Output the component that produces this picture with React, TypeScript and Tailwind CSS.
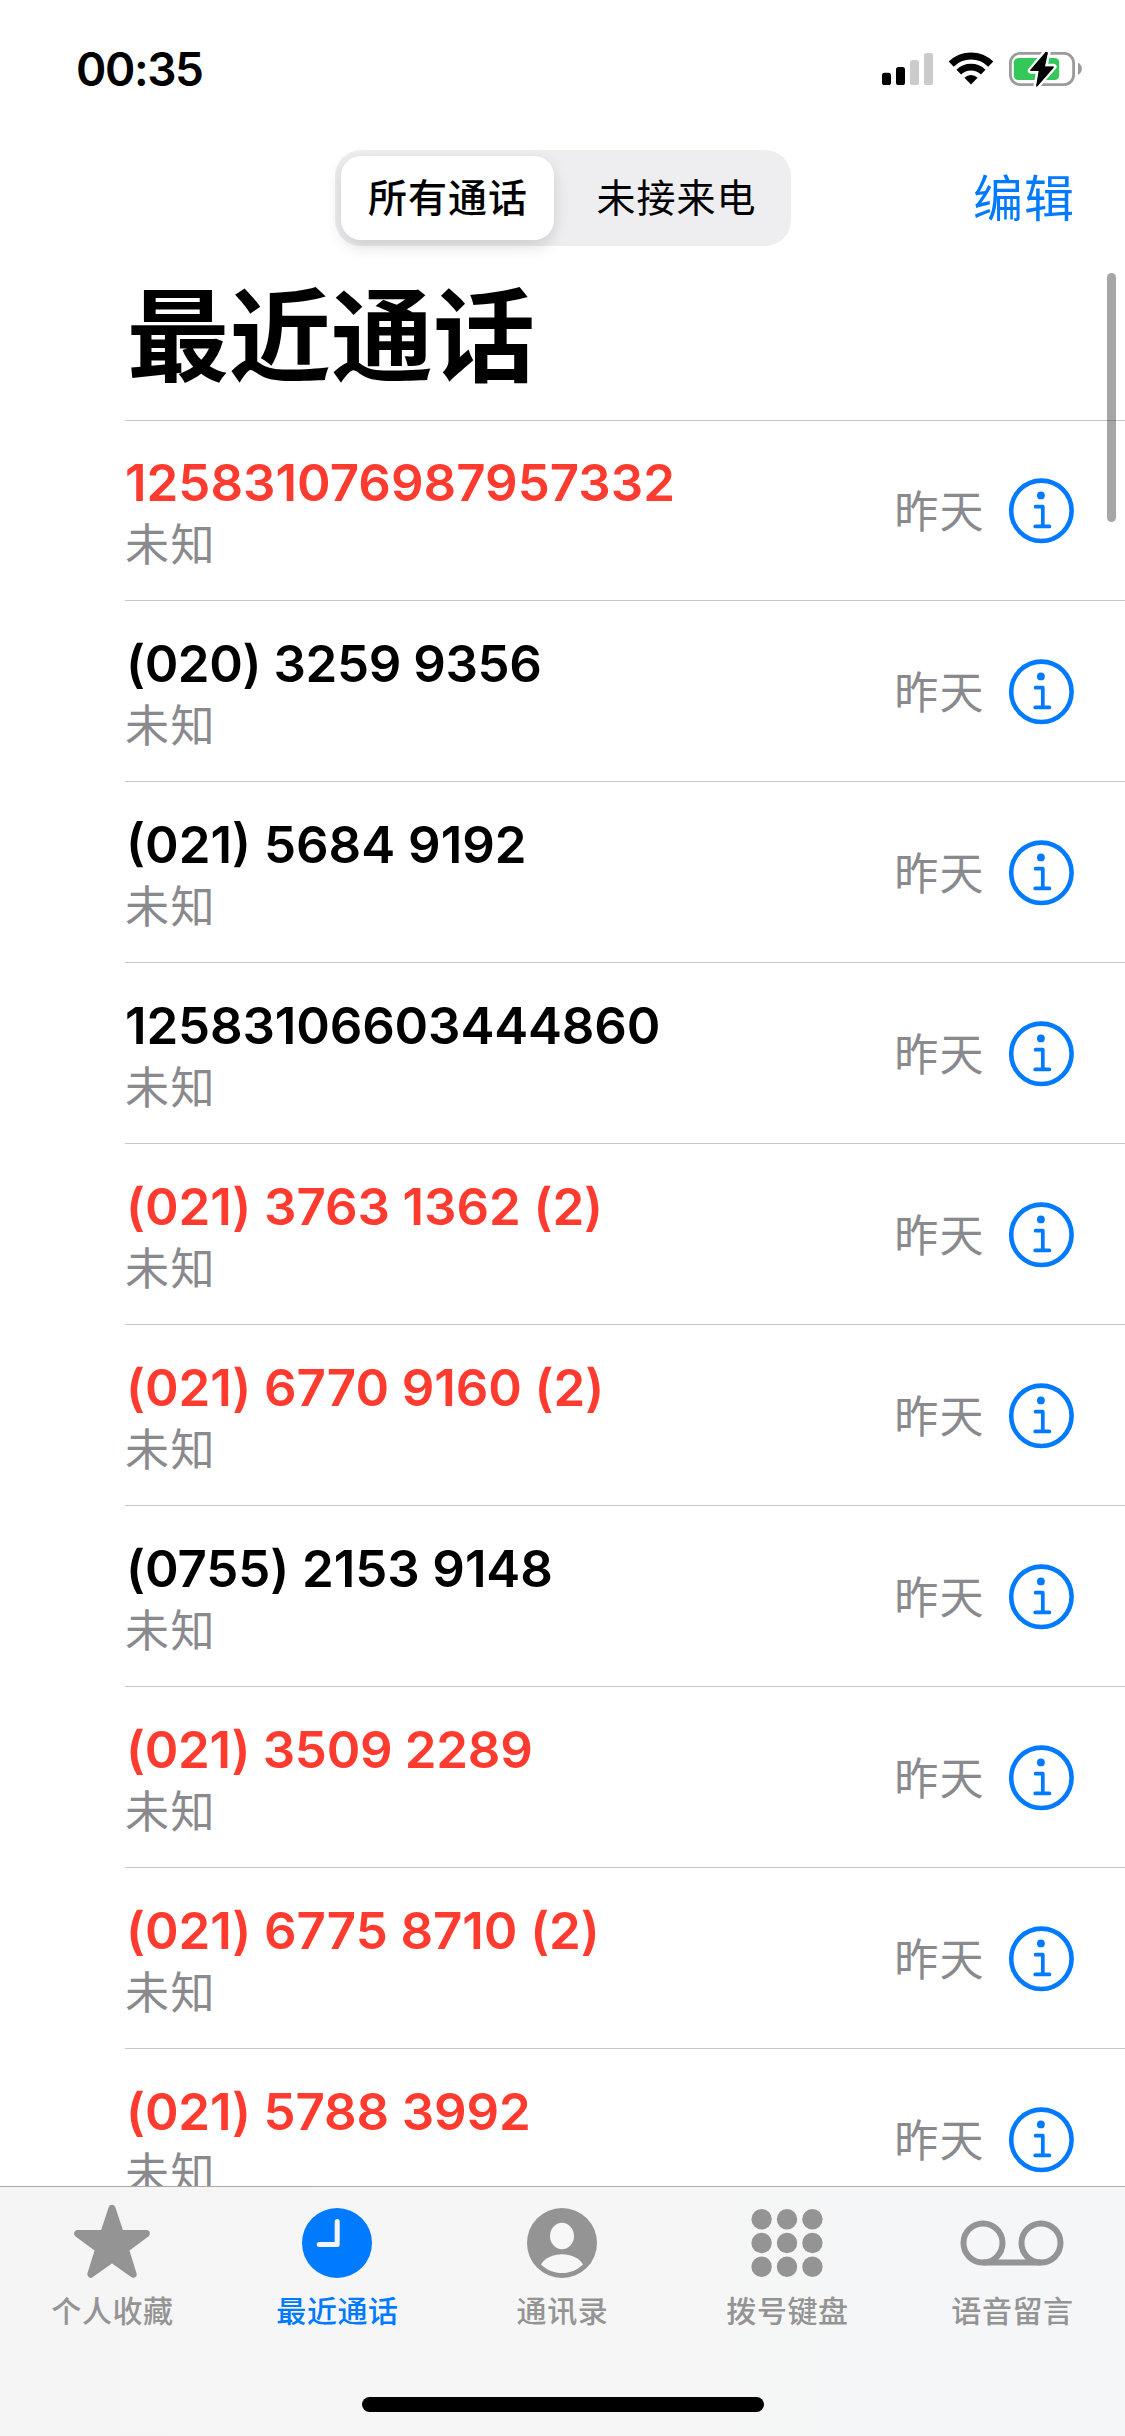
import React from 'react';

interface Call {
  id: number;
  number: string;
  missed: boolean;
  tracking?: string;
}

const CALLS: Call[] = [
  { id: 1, number: '125831076987957332', missed: true },
  { id: 2, number: '(020) 3259 9356', missed: false, tracking: 'pl-px tracking-[-0.4px]' },
  { id: 3, number: '(021) 5684 9192', missed: false, tracking: 'pl-px' },
  { id: 4, number: '12583106603444860', missed: false, tracking: 'tracking-[-0.15px]' },
  { id: 5, number: '(021) 3763 1362 (2)', missed: true, tracking: 'pl-px tracking-[-0.08px]' },
  { id: 6, number: '(021) 6770 9160 (2)', missed: true, tracking: 'pl-px tracking-[-0.08px]' },
  { id: 7, number: '(0755) 2153 9148', missed: false, tracking: 'pl-px tracking-[-0.08px]' },
  { id: 8, number: '(021) 3509 2289', missed: true, tracking: 'pl-px tracking-[-0.3px]' },
  { id: 9, number: '(021) 6775 8710 (2)', missed: true, tracking: 'pl-px tracking-[-0.08px]' },
  { id: 10, number: '(021) 5788 3992', missed: true, tracking: 'pl-px tracking-[-0.15px]' },
];

const SignalIcon = () => (
  <svg width="51" height="34" viewBox="0 0 51 34">
    <rect x="0" y="20.7" width="9" height="12.3" rx="2.6" fill="#000" />
    <rect x="14" y="15" width="9" height="18" rx="2.6" fill="#000" />
    <rect x="28" y="8" width="9" height="25" rx="2.6" fill="#cbcbcb" />
    <rect x="42" y="1" width="9" height="32" rx="2.6" fill="#cbcbcb" />
  </svg>
);

const WifiIcon = () => (
  <svg width="46" height="34" viewBox="0 0 46 34">
    <path d="M3.2 12.1a28.2 28.2 0 0 1 39.6 0" fill="none" stroke="#000" strokeWidth="7.2" />
    <path d="M10.8 20.1a17.4 17.4 0 0 1 24.4 0" fill="none" stroke="#000" strokeWidth="6.6" />
    <path d="M16.4 25.7a9.5 9.5 0 0 1 13.2 0L23 32.6z" fill="#000" />
  </svg>
);

const BatteryIcon = () => (
  <svg width="74" height="38" viewBox="0 0 74 38">
    <rect x="1.4" y="3.4" width="63.2" height="31.2" rx="9.6" fill="none" stroke="#9b9b9b" strokeWidth="2.8" />
    <path d="M69 12.7a6.6 6.6 0 0 1 0 12z" fill="#9b9b9b" />
    <rect x="4.8" y="8" width="45.4" height="22" rx="4.6" fill="#34c759" />
    <path
      d="M37.2 2 L21.8 20.7 H30.2 L27.4 36.5 L44.6 16.8 H35.4 L38.6 2.4 Z"
      fill="#000"
      stroke="#fff"
      strokeWidth="6"
      strokeLinejoin="round"
      paintOrder="stroke"
    />
    <path
      d="M37.2 2.6 L22 20.3 H30.6 L27.9 35.8 L44 17.2 H35 L38 3 Z"
      stroke="#000"
      strokeWidth="1.6"
      strokeLinejoin="round"
    />
  </svg>
);

const InfoIcon = () => (
  <svg width="66" height="66" viewBox="0 0 66 66" fill="none" stroke="#007aff" strokeLinecap="round">
    <circle cx="33.4" cy="32.8" r="30.2" strokeWidth="4.6" />
    <circle cx="32.9" cy="17.4" r="3.9" fill="#007aff" stroke="none" />
    <path d="M27.6 28.7h7.2V48.4M27.2 48.4h14.2" strokeWidth="3.7" strokeLinejoin="round" />
  </svg>
);

const StarIcon = () => (
  <svg width="78" height="74" viewBox="0 0 78 74" className="overflow-visible">
    <path
      d="M39 2.4 L47.3 27.4 L73.3 27.6 L52.4 43.2 L60.2 68.2 L39 53.2 L17.8 68.2 L25.6 43.2 L4.7 27.6 L30.7 27.4 Z"
      fill="#949494"
      stroke="#949494"
      strokeWidth="7"
      strokeLinejoin="round"
    />
  </svg>
);

const ClockIcon = () => (
  <svg width="70" height="70" viewBox="0 0 70 70">
    <circle cx="35" cy="35" r="35" fill="#007aff" />
    <path d="M35.2 13.6v22.8H17.2" fill="none" stroke="#f4f4f4" strokeWidth="5" strokeLinecap="round" strokeLinejoin="round" />
  </svg>
);

const PersonIcon = () => (
  <svg width="70" height="70" viewBox="0 0 70 70">
    <circle cx="35" cy="35" r="35" fill="#949494" />
    <ellipse cx="35" cy="28" rx="12" ry="13.2" fill="#f7f7f7" />
    <path d="M14 56.4C18 50 26 46.3 35 46.3S52 50 56 56.4C50 62 43 65 35 65S20 62 14 56.4z" fill="#f7f7f7" />
  </svg>
);

const KeypadIcon = () => (
  <svg width="72" height="70" viewBox="0 0 72 70" fill="#949494">
    {[11.3, 35, 58.7].map((cy) =>
      [10.6, 36, 61.4].map((cx) => <circle key={`${cx}-${cy}`} cx={cx} cy={cy} r="10.2" />)
    )}
  </svg>
);

const VoicemailIcon = () => (
  <svg width="104" height="46" viewBox="0 0 104 46" fill="none" stroke="#949496" strokeWidth="6">
    <circle cx="23" cy="23" r="19.5" />
    <circle cx="81" cy="23" r="19.5" />
    <path d="M23 42.5h58" />
  </svg>
);

const TABS = [
  { label: '个人收藏', icon: <StarIcon />, active: false },
  { label: '最近通话', icon: <ClockIcon />, active: true },
  { label: '通讯录', icon: <PersonIcon />, active: false },
  { label: '拨号键盘', icon: <KeypadIcon />, active: false },
  { label: '语音留言', icon: <VoicemailIcon />, active: false },
];

const CallRow: React.FC<{ call: Call }> = ({ call }) => (
  <li className="flex h-[181px] shrink-0 items-start border-b border-[#c6c6c8] pt-px pr-[51px] first:h-[180px] first:pt-0">
    <div className="flex-1 pt-[32px]">
      <div
        className={`text-[51px] leading-[60px] font-semibold whitespace-nowrap ${call.tracking ?? ''} ${
          call.missed ? 'text-[#ff3b30]' : 'text-black'
        }`}
      >
        {call.number}
      </div>
      <div className="mt-[2px] text-[44px] leading-[61px] tracking-[1.4px] text-[#8a8a8e]">未知</div>
    </div>
    <div className="mt-[61px] mr-[23px] text-[44px] leading-[60px] tracking-[1.4px] text-[#8a8a8e]">昨天</div>
    <button className="mt-[57px]">
      <InfoIcon />
    </button>
  </li>
);

export default function App() {
  return (
    <div className="relative flex h-[2436px] w-[1125px] flex-col overflow-hidden bg-white font-['Inter','Noto_Sans_CJK_SC',sans-serif] text-black">
      <header className="flex h-[132px] shrink-0 items-start justify-between pr-[42px] pl-[76px]">
        <div className="mt-[39px] text-[46px] leading-[60px] font-semibold tracking-[-1.4px]">00:35</div>
        <div className="mt-[50px] flex items-start">
          <div className="mt-[2px] mr-[15px]">
            <SignalIcon />
          </div>
          <div className="mt-[2px] mr-[15px]">
            <WifiIcon />
          </div>
          <BatteryIcon />
        </div>
      </header>

      <nav className="grid h-[132px] shrink-0 grid-cols-[335px_456px_1fr] items-start pt-[18px]">
        <div className="col-start-2 flex h-[96px] rounded-[26px] bg-[#eeeef0] p-[6px]">
          <button className="h-[84px] w-[213px] rounded-[20px] bg-white pl-px text-[39px] leading-[84px] font-medium tracking-[1px] shadow-[0_6px_16px_rgba(0,0,0,0.14)]">
            所有通话
          </button>
          <button className="ml-[6px] flex-1 pl-[8px] text-[39px] leading-[84px] tracking-[1px]">未接来电</button>
        </div>
        <button className="pr-[50px] text-right text-[50px] leading-[98px] tracking-[1px] text-[#007aff]">编辑</button>
      </nav>

      <main className="flex min-h-0 flex-1 flex-col overflow-hidden pl-[125px]">
        <h1 className="h-[157px] shrink-0 border-b border-[#c6c6c8] pt-[3px] pl-[2px] text-[102px] leading-[140px] font-bold">
          最近通话
        </h1>
        <ul className="flex flex-col">
          {CALLS.map((call) => (
            <CallRow key={call.id} call={call} />
          ))}
        </ul>
      </main>

      <footer className="flex h-[250px] shrink-0 flex-col items-center border-t border-[#a9a9ab] bg-linear-to-r from-[#f5f5f5] via-[#f6f6f6] to-[#f5f6f8]">
        <div className="grid w-full grid-cols-5">
          {TABS.map((tab) => (
            <button key={tab.label} className="flex flex-col items-center">
              <span className="mt-[16px] mr-[2px] flex h-[80px] items-center justify-center">{tab.icon}</span>
              <span
                className={`mt-[6px] text-[30px] leading-[44px] font-medium tracking-[0.6px] ${
                  tab.active ? 'text-[#007aff]' : 'text-[#949494]'
                }`}
              >
                {tab.label}
              </span>
            </button>
          ))}
        </div>
        <div className="mt-auto mb-[24px] h-[15px] w-[402px] rounded-full bg-black" />
      </footer>

      {/* scroll indicator */}
      <div className="absolute top-[273px] right-[9px] h-[249px] w-[9px] rounded-full bg-black/35" />
    </div>
  );
}
